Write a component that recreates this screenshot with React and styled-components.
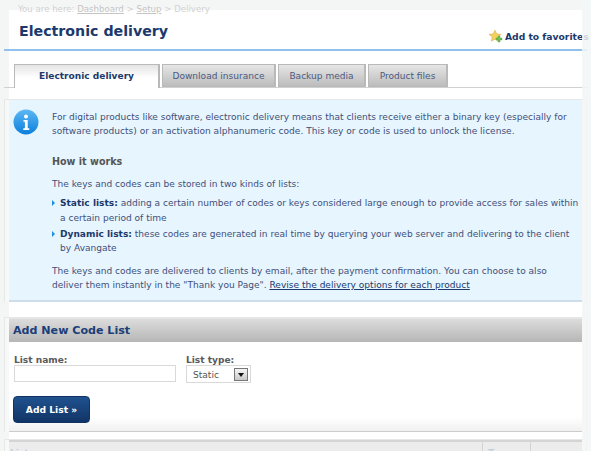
import styled, { createGlobalStyle } from "styled-components";

const GlobalStyle = createGlobalStyle`
  html, body {
    margin: 0;
    padding: 0;
    background: #f4f6f6;
  }
`;

const Page = styled.div`
  position: relative;
  width: 591px;
  height: 451px;
  overflow: hidden;
  background: #f4f6f6;
  font-family: "DejaVu Sans", Verdana, sans-serif;
  font-size: 9.05px;
  color: #3f4f78;
`;

const Breadcrumb = styled.div`
  position: relative;
  z-index: 1;
  height: 10px;
  padding-left: 18px;
  line-height: 19px;
  font-size: 8.6px;
  color: #d2d2d2;

  a {
    color: #c4c4c4;
    text-decoration: underline;
  }
`;

const Sheet = styled.div`
  margin: 0 9px;
  background: #fff;
`;

const Header = styled.div`
  display: flex;
  justify-content: space-between;
  height: 39px;
  margin: 0 -5px;
  padding: 0 0 0 15px;
  border-bottom: 2px solid #90c1ed;
  box-sizing: content-box;
`;

const Title = styled.h1`
  margin: 0;
  padding-top: 11px;
  font-size: 14.2px;
  line-height: 20px;
  font-weight: 700;
  color: #1b3a6b;
`;

const Favorites = styled.a`
  display: flex;
  align-items: center;
  gap: 2px;
  width: 98px;
  height: 16px;
  margin-top: 18px;
  white-space: nowrap;
  font-size: 9.2px;
  font-weight: 700;
  color: #1b3a6b;

  svg {
    flex: none;
  }
`;

const Tabs = styled.div`
  display: flex;
  align-items: flex-end;
  gap: 2px;
  height: 23px;
  margin: 13px -5px 0;
  padding-left: 10px;
  border-bottom: 1px solid #d0d0d0;
`;

const Tab = styled.div`
  box-sizing: border-box;
  width: ${(p) => p.$width}px;
  height: ${(p) => (p.$active ? 24 : 23)}px;
  margin-bottom: ${(p) => (p.$active ? -1 : 0)}px;
  border: 1px solid #b9b9b9;
  border-bottom: ${(p) => (p.$active ? "none" : "1px solid #b9b9b9")};
  border-right-width: 2px;
  background: ${(p) =>
    p.$active
      ? "linear-gradient(#e4e4e4, #fff 55%)"
      : "linear-gradient(#e6e6e6, #bcbcbc)"};
  text-align: center;
  line-height: 23px;
  font-weight: ${(p) => (p.$active ? 700 : 400)};
  color: ${(p) => (p.$active ? "#1b3a6b" : "#4b5a80")};
`;

const Framed = styled.div`
  margin: ${(p) => p.$top}px -5px 0;
  padding: 0 5px;
  border-top: 1px solid #e6e8e8;
  border-left: 1px solid #e6e8e8;
  border-right: 1px solid #e6e8e8;
  background: #f7f8f8;
`;

const InfoBox = styled.div`
  display: flex;
  box-sizing: border-box;
  height: 202px;
  margin: 0 -1px;
  border-bottom: 2px solid #cfdde8;
  background: #e7f5ff;
`;

const IconCol = styled.div`
  box-sizing: border-box;
  width: 43px;
  padding: 9px 0 0 4px;
`;

const InfoText = styled.div`
  flex: 1;
  padding-top: 10px;
  line-height: 14.4px;

  p {
    margin: 0;
  }
`;

const HowTitle = styled.h3`
  margin: 16px 0 8px;
  font-size: 9.6px;
  line-height: 14px;
  font-weight: 700;
  color: #555;
`;

const Bullets = styled.ul`
  margin: 3px 0 0;
  padding: 0;
  list-style: none;
`;

const Bullet = styled.li`
  position: relative;
  padding: 2px 0 0 8px;

  b {
    color: #1b3a6b;
  }

  &::before {
    content: "";
    position: absolute;
    left: 0;
    top: 6px;
    border-left: 3px solid #1d8fe0;
    border-top: 3px solid transparent;
    border-bottom: 3px solid transparent;
  }
`;

const Closing = styled.p`
  padding: 8px 12px 0 0;

  a {
    color: #1b3a6b;
    text-decoration: underline;
  }
`;

const SectionBar = styled.h2`
  height: 23px;
  margin: 0 -1px;
  padding-left: 4px;
  border-top: 1px solid #e4e4e4;
  background: linear-gradient(#dcdcdc, #b6b6b6);
  font-size: 11.1px;
  line-height: 23px;
  font-weight: 700;
  color: #1b3f78;
`;

const FormBody = styled.div`
  box-sizing: border-box;
  height: 90px;
  margin: 0 -1px;
  padding: 12px 0 0 5px;
  border-bottom: 1px solid #cccccc;
  background: linear-gradient(#fff 85%, #f1f1f1);
`;

const Fields = styled.div`
  display: flex;
  gap: 10px;
`;

const Field = styled.label`
  display: flex;
  flex-direction: column;
`;

const FieldLabel = styled.span`
  height: 11px;
  line-height: 13px;
  font-weight: 700;
  color: #5a5a5a;
`;

const TextInput = styled.input`
  box-sizing: border-box;
  width: 162px;
  height: 17px;
  margin: 0;
  border: 1px solid #d9d9d9;
  background: #fff;
`;

const SelectBox = styled.div`
  display: flex;
  align-items: center;
  justify-content: space-between;
  box-sizing: border-box;
  width: 65px;
  height: 18px;
  padding: 1px 2px 0 6px;
  border: 1px solid #d9d9d9;
  color: #555;
`;

const SelectArrow = styled.span`
  display: flex;
  align-items: center;
  justify-content: center;
  box-sizing: border-box;
  width: 14px;
  height: 13px;
  border: 1px solid #777;
  background: linear-gradient(#f5f5f5, #c8c8c8);

  &::after {
    content: "";
    border-top: 4px solid #111;
    border-left: 3px solid transparent;
    border-right: 3px solid transparent;
  }
`;

const AddButton = styled.button`
  display: block;
  width: 77px;
  height: 27px;
  margin: 13px 0 0 -1px;
  padding: 0;
  border: 1px solid #123263;
  border-radius: 4px;
  background: linear-gradient(#1f528f, #123466);
  font-family: inherit;
  font-size: 9.2px;
  font-weight: 700;
  color: #fff;
`;

const TableHead = styled.div`
  display: flex;
  height: 14px;
  margin: 0 -1px;
  padding-left: 1px;
  border-top: 2px solid #d4d4d4;
  background: #ececec;
  color: #c3cede;
  line-height: 22px;
`;

const HeadCell = styled.div`
  flex: ${(p) => (p.$width ? `0 0 ${p.$width}px` : 1)};
  box-sizing: border-box;
  padding-left: ${(p) => (p.$width ? 5 : 0)}px;
  border-left: ${(p) => (p.$width ? "1px solid #d4d4d4" : "none")};
  font-weight: 700;
`;

// the grey page gutter fades whatever runs past the sheet's right edge
const RightGutter = styled.div`
  position: absolute;
  top: 0;
  right: 0;
  bottom: 0;
  width: 9px;
  background: rgba(244, 246, 246, 0.82);
`;

function InfoIcon() {
  return (
    <svg width="26" height="26" viewBox="0 0 26 26">
      <defs>
        <linearGradient id="infoFill" x1="0" y1="0" x2="0" y2="1">
          <stop offset="0" stopColor="#5cb8f4" />
          <stop offset="1" stopColor="#0c7fdc" />
        </linearGradient>
      </defs>
      <circle cx="13" cy="13" r="12.5" fill="url(#infoFill)" />
      <circle cx="13" cy="7.5" r="2" fill="#fff" />
      <path d="M10.5 11h4.2v8.2h1.6V21h-6v-1.800h1.600v-6.400h-1.400z" fill="#fff" />
    </svg>
  );
}

function StarIcon() {
  return (
    <svg width="14" height="13" viewBox="0 0 14 13">
      <path
        d="M6 0l1.800 3.800 4.200.5-3.100 2.800.8 4.100L6 9.200l-3.700 2 .8-4.100L0 4.300l4.200-.5z"
        fill="#f3cf5e"
        stroke="#d9ab55"
        strokeWidth="0.5"
      />
      <path d="M9 6h2v2h2v2h-2v2H9v-2H7V8h2z" fill="#6cc04a" stroke="#4f9a35" strokeWidth="0.4" />
    </svg>
  );
}

export default function App() {
  return (
    <Page>
      <GlobalStyle />
      <Breadcrumb>
        You are here: <a>Dashboard</a> &gt; <a>Setup</a> &gt; Delivery
      </Breadcrumb>
      <Sheet>
        <Header>
          <Title>Electronic delivery</Title>
          <Favorites>
            <StarIcon />
            Add to favorites
          </Favorites>
        </Header>
        <Tabs>
          <Tab $active $width={146}>Electronic delivery</Tab>
          <Tab $width={114}>Download insurance</Tab>
          <Tab $width={88}>Backup media</Tab>
          <Tab $width={80}>Product files</Tab>
        </Tabs>
        <Framed $top={11}>
          <InfoBox>
            <IconCol>
              <InfoIcon />
            </IconCol>
            <InfoText>
              <p>
                For digital products like software, electronic delivery means that clients receive either a binary key (especially for
                software products) or an activation alphanumeric code. This key or code is used to unlock the license.
              </p>
              <HowTitle>How it works</HowTitle>
              <p>The keys and codes can be stored in two kinds of lists:</p>
              <Bullets>
                <Bullet>
                  <b>Static lists:</b> adding a certain number of codes or keys considered large enough to provide access for sales within
                  a certain period of time
                </Bullet>
                <Bullet>
                  <b>Dynamic lists:</b> these codes are generated in real time by querying your web server and delivering to the client
                  by Avangate
                </Bullet>
              </Bullets>
              <Closing>
                The keys and codes are delivered to clients by email, after the payment confirmation. You can choose to also
                deliver them instantly in the "Thank you Page". <a>Revise the delivery options for each product</a>
              </Closing>
            </InfoText>
          </InfoBox>
        </Framed>
        <Framed $top={15}>
          <SectionBar>Add New Code List</SectionBar>
          <FormBody>
            <Fields>
              <Field>
                <FieldLabel>List name:</FieldLabel>
                <TextInput />
              </Field>
              <Field>
                <FieldLabel>List type:</FieldLabel>
                <SelectBox>
                  Static
                  <SelectArrow />
                </SelectBox>
              </Field>
            </Fields>
            <AddButton>Add List »</AddButton>
          </FormBody>
        </Framed>
        <Framed $top={7}>
          <TableHead>
            <HeadCell>List name</HeadCell>
            <HeadCell $width={48}>Type</HeadCell>
            <HeadCell $width={52} />
          </TableHead>
        </Framed>
      </Sheet>
      <RightGutter />
    </Page>
  );
}
